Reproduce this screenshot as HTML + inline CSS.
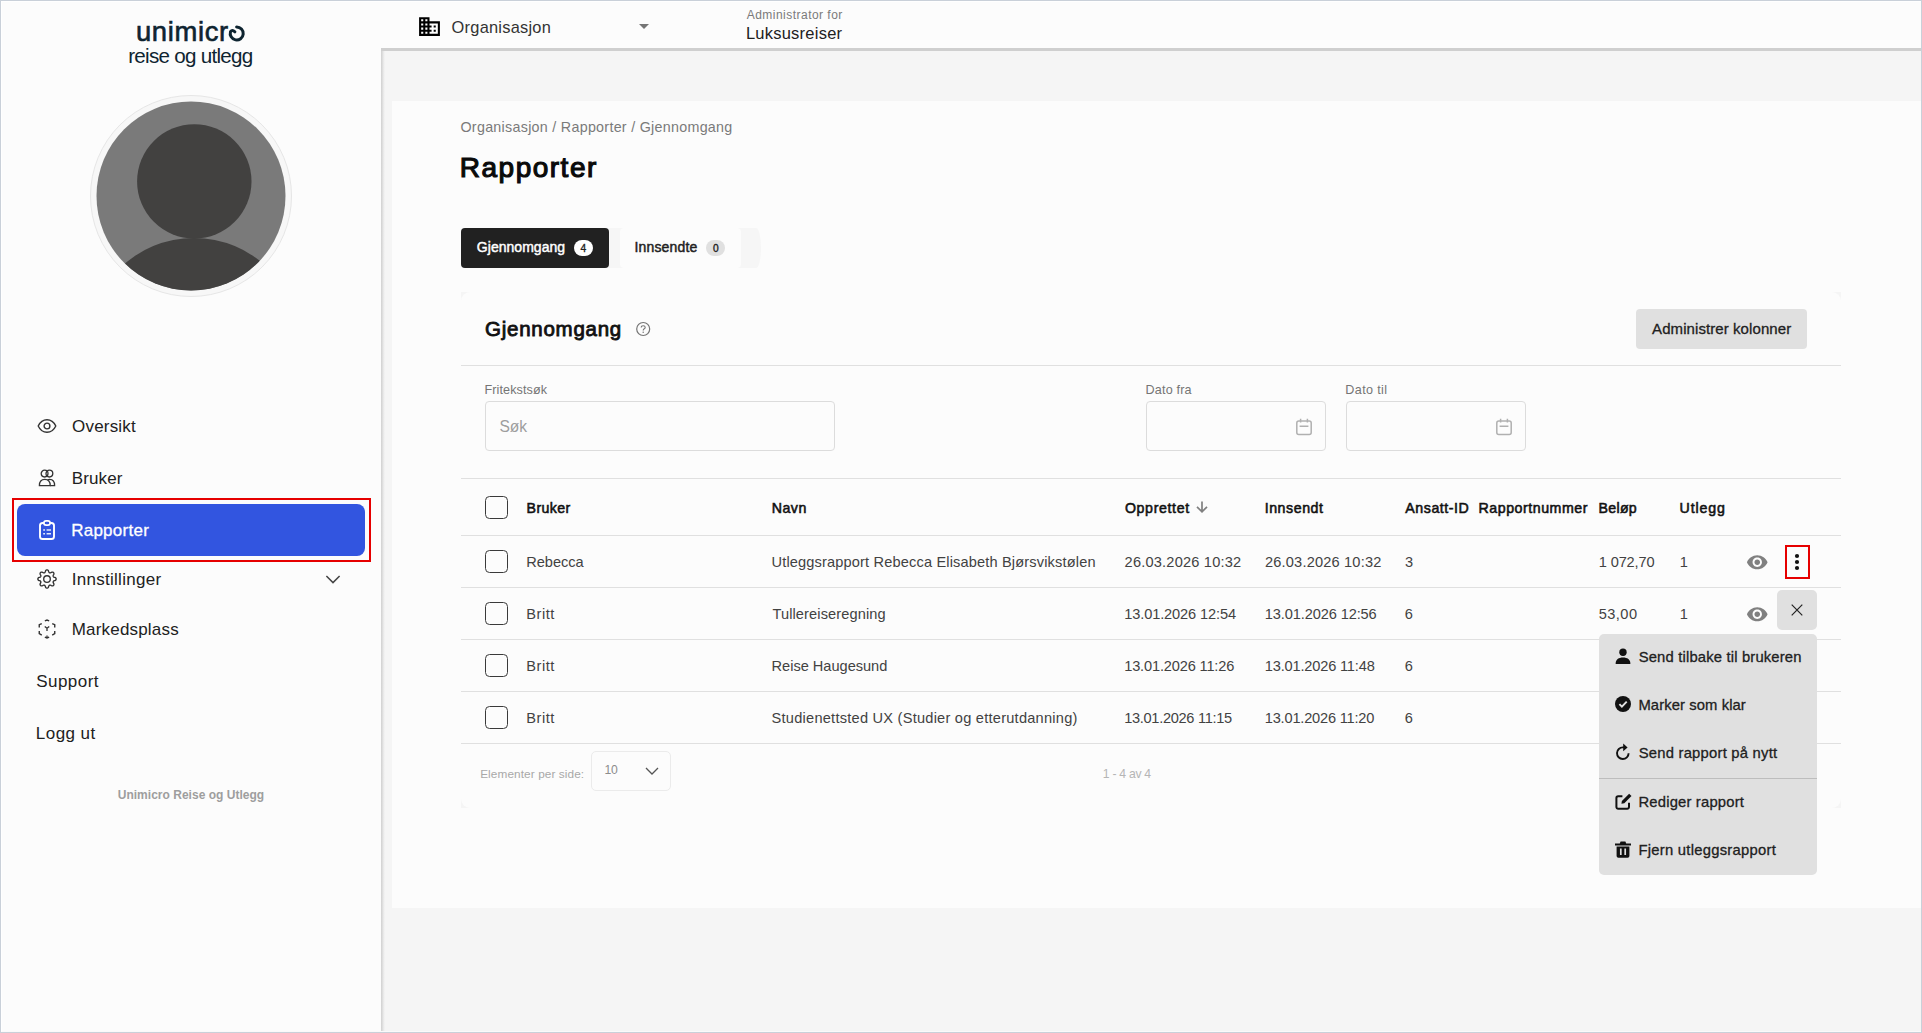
<!DOCTYPE html>
<html lang="no">
<head>
<meta charset="utf-8">
<title>Rapporter - Unimicro Reise og Utlegg</title>
<style>
*{box-sizing:border-box;margin:0;padding:0}
html,body{width:1922px;height:1033px;overflow:hidden;background:#fcfcfc}
body{position:relative;font-family:"Liberation Sans",sans-serif;color:#212121;-webkit-font-smoothing:antialiased}
.abs{position:absolute}
.t{position:absolute;white-space:nowrap;line-height:1}
svg{position:absolute;overflow:visible}
/* frame */
#frame{position:absolute;left:0;top:0;width:1922px;height:1033px;border:1px solid #c9d0d9;z-index:50;pointer-events:none}
#frame2{position:absolute;left:1px;top:1px;width:1920px;height:1031px;border:1px solid #ffffff;border-right:none;border-bottom-color:#fafafa;z-index:49;pointer-events:none}
/* sidebar */
#sidebar{left:0;top:0;width:381px;height:1033px;background:#fcfcfc}
/* topbar */
#topbar{left:381px;top:0;width:1541px;height:48px;background:#fcfcfc}
/* main */
#main{left:381px;top:48px;width:1541px;height:985px;background:#f5f5f5}
#main-top{left:381px;top:48px;width:1541px;height:3px;background:#cfcfcf}
#main-left{left:381px;top:51px;width:4px;height:982px;background:linear-gradient(to right,#d0d0d0,#dcdcdc 33%,#ebebeb 66%,#f5f5f5)}
#content{left:392px;top:101px;width:1530px;height:807px;background:#fcfcfc}
.nav{font-size:17px;color:#212121}
.hline{position:absolute;height:1px;background:#e0e0e0;left:461px;width:1380px}
.cb{position:absolute;width:23px;height:23px;border:1.4px solid #3a3a3a;border-radius:4.5px;background:#fcfcfc;left:485px}
.th{font-weight:normal;font-size:13.6px;color:#111;-webkit-text-stroke:0.55px #111}
.td{font-size:14.4px;color:#424242}
.lbl{font-size:12.5px;color:#757575}
.inp{position:absolute;height:50px;border:1px solid #dcdcdc;border-radius:4px;background:#fcfcfc;top:401px}
.mi{font-size:15px;color:#212121;-webkit-text-stroke:0.3px #212121}
</style>
</head>
<body>
<div id="sidebar" class="abs"></div>
<div id="topbar" class="abs"></div>
<div id="main" class="abs"></div>
<div id="main-top" class="abs"></div>
<div id="main-left" class="abs"></div>
<div id="content" class="abs"></div>


<!-- logo -->
<span class="t" id="logo1" style="left:135.9px;top:18px;font-size:27.4px;font-weight:normal;color:#0e2430;letter-spacing:0.66px;-webkit-text-stroke:0.62px #0e2430">unimicr</span>
<svg style="left:225px;top:21px" width="24" height="24" viewBox="225 21 24 24"><path d="M236.6 27 A6.5 6.5 0 1 1 230.5 31.6 Q232.2 29.4 234.9 31.8" fill="none" stroke="#0e2430" stroke-width="3" stroke-linecap="round"/></svg>
<span class="t" id="logo2" style="left:128.23px;top:46px;font-size:20.6px;color:#0e2430;letter-spacing:-0.727px">reise og utlegg</span>

<!-- avatar -->
<div class="abs" style="left:90px;top:95px;width:202px;height:202px;border-radius:50%;border:1px solid #e6e6e6;background:#f7f7f7"></div>
<svg style="left:96px;top:101px" width="190" height="190" viewBox="96 101 190 190">
  <defs><clipPath id="avc"><circle cx="191" cy="196" r="94.5"/></clipPath></defs>
  <circle cx="191" cy="196" r="94.5" fill="#7a7a7a"/>
  <g clip-path="url(#avc)" fill="#424140">
    <circle cx="194.3" cy="181.4" r="57.2"/>
    <circle cx="194" cy="344.5" r="106.5"/>
  </g>
</svg>

<!-- nav -->
<svg style="left:37px;top:418px" width="20" height="16" viewBox="0 0 20 16"><path d="M1.2 8 C3.2 3.8 6.3 1.7 10 1.7 S16.8 3.8 18.8 8 C16.8 12.2 13.7 14.3 10 14.3 S3.2 12.2 1.2 8Z" fill="none" stroke="#333" stroke-width="1.4"/><circle cx="10" cy="8" r="2.9" fill="none" stroke="#333" stroke-width="1.4"/></svg>
<span class="t nav" id="n1" style="left:72.06px;top:418px;font-size:17px;letter-spacing:0.190px">Oversikt</span>

<svg style="left:38px;top:469px" width="18" height="18" viewBox="0 0 18 18" fill="none" stroke="#333" stroke-width="1.3"><circle cx="6.6" cy="4.6" r="3.4"/><circle cx="11.4" cy="4.6" r="3.4"/><path d="M1.4 16.6 C1.4 12.6 3.6 10.4 6.8 10.4 C10 10.4 12.2 12.6 12.2 16.6 Z"/><path d="M9.6 10.9 C10.2 10.6 10.9 10.4 11.6 10.4 C14.6 10.4 16.6 12.6 16.6 16.6 H12.2"/></svg>
<span class="t nav" id="n2" style="left:71.65px;top:470px;font-size:17px;letter-spacing:0.156px">Bruker</span>

<div class="abs" style="left:12px;top:498px;width:359px;height:64px;border:2px solid #e60000"></div>
<div class="abs" style="left:17px;top:504px;width:348px;height:52px;border-radius:8px;background:#3255e0"></div>
<svg style="left:38px;top:519px" width="18" height="22" viewBox="38 519 18 22" fill="none" stroke="#fff"><rect x="40" y="523" width="14" height="16" rx="2.6" stroke-width="1.9"/><rect x="43.9" y="520.8" width="6.2" height="4.4" rx="2.2" stroke-width="1.7" fill="#3255e0"/><path d="M43.2 530.1h1.8M46.6 530.1h4.4M43.2 533.8h1.8M46.6 533.8h4.4" stroke-width="1.5" stroke="#e4eafc"/></svg>
<span class="t nav" id="n3" style="left:71.14px;top:522px;color:#fff;font-size:17px;letter-spacing:0.270px;-webkit-text-stroke:0.3px #fff">Rapporter</span>

<svg style="left:36px;top:568px" width="22" height="22" viewBox="-11 -11 22 22" fill="none" stroke="#333" stroke-width="1.35"><path d="M9.15 0.00 L9.11 0.36 L8.98 0.71 L8.76 1.04 L8.44 1.34 L7.80 1.55 L7.15 1.72 L6.81 1.92 L6.56 2.13 L6.37 2.35 L6.24 2.58 L6.16 2.84 L6.14 3.13 L6.18 3.46 L6.27 3.84 L6.61 4.42 L6.91 5.02 L6.93 5.46 L6.85 5.85 L6.69 6.19 L6.47 6.47 L6.19 6.69 L5.85 6.85 L5.46 6.93 L5.02 6.91 L4.42 6.61 L3.84 6.27 L3.46 6.18 L3.13 6.14 L2.84 6.16 L2.58 6.24 L2.35 6.37 L2.13 6.56 L1.92 6.81 L1.72 7.15 L1.55 7.80 L1.34 8.44 L1.04 8.76 L0.71 8.98 L0.36 9.11 L0.00 9.15 L-0.36 9.11 L-0.71 8.98 L-1.04 8.76 L-1.34 8.44 L-1.55 7.80 L-1.72 7.15 L-1.92 6.81 L-2.13 6.56 L-2.35 6.37 L-2.58 6.24 L-2.84 6.16 L-3.13 6.14 L-3.46 6.18 L-3.84 6.27 L-4.42 6.61 L-5.02 6.91 L-5.46 6.93 L-5.85 6.85 L-6.19 6.69 L-6.47 6.47 L-6.69 6.19 L-6.85 5.85 L-6.93 5.46 L-6.91 5.02 L-6.61 4.42 L-6.27 3.84 L-6.18 3.46 L-6.14 3.13 L-6.16 2.84 L-6.24 2.58 L-6.37 2.35 L-6.56 2.13 L-6.81 1.92 L-7.15 1.72 L-7.80 1.55 L-8.44 1.34 L-8.76 1.04 L-8.98 0.71 L-9.11 0.36 L-9.15 0.00 L-9.11 -0.36 L-8.98 -0.71 L-8.76 -1.04 L-8.44 -1.34 L-7.80 -1.55 L-7.15 -1.72 L-6.81 -1.92 L-6.56 -2.13 L-6.37 -2.35 L-6.24 -2.58 L-6.16 -2.84 L-6.14 -3.13 L-6.18 -3.46 L-6.27 -3.84 L-6.61 -4.42 L-6.91 -5.02 L-6.93 -5.46 L-6.85 -5.85 L-6.69 -6.19 L-6.47 -6.47 L-6.19 -6.69 L-5.85 -6.85 L-5.46 -6.93 L-5.02 -6.91 L-4.42 -6.61 L-3.84 -6.27 L-3.46 -6.18 L-3.13 -6.14 L-2.84 -6.16 L-2.58 -6.24 L-2.35 -6.37 L-2.13 -6.56 L-1.92 -6.81 L-1.72 -7.15 L-1.55 -7.80 L-1.34 -8.44 L-1.04 -8.76 L-0.71 -8.98 L-0.36 -9.11 L-0.00 -9.15 L0.36 -9.11 L0.71 -8.98 L1.04 -8.76 L1.34 -8.44 L1.55 -7.80 L1.72 -7.15 L1.92 -6.81 L2.13 -6.56 L2.35 -6.37 L2.58 -6.24 L2.84 -6.16 L3.13 -6.14 L3.46 -6.18 L3.84 -6.27 L4.42 -6.61 L5.02 -6.91 L5.46 -6.93 L5.85 -6.85 L6.19 -6.69 L6.47 -6.47 L6.69 -6.19 L6.85 -5.85 L6.93 -5.46 L6.91 -5.02 L6.61 -4.42 L6.27 -3.84 L6.18 -3.46 L6.14 -3.13 L6.16 -2.84 L6.24 -2.58 L6.37 -2.35 L6.56 -2.13 L6.81 -1.92 L7.15 -1.72 L7.80 -1.55 L8.44 -1.34 L8.76 -1.04 L8.98 -0.71 L9.11 -0.36Z"/><circle cx="0" cy="0" r="3.3"/></svg>
<span class="t nav" id="n4" style="left:71.76px;top:571px;font-size:17px;letter-spacing:0.275px">Innstillinger</span>
<svg style="left:325px;top:573px" width="16" height="12" viewBox="325 573 16 12"><path d="M326.4 576 L333 582.6 L339.6 576" fill="none" stroke="#444" stroke-width="1.5"/></svg>

<svg style="left:36px;top:618px" width="22" height="22" viewBox="-11 -11 22 22" fill="none" stroke="#333" stroke-width="1.55"><g transform="translate(0,0.1) scale(0.9)"><path d="M-2.4 -9.2 L0 -10 L2.4 -9.2"/><path d="M5.8 -6.2 L8.6 -4.9 L8.6 -1.8"/><path d="M8.6 2.2 L8.6 5 L5.8 6.600"/><path d="M2.4 8.800 L0 9.800 L-2.4 8.800"/><path d="M-5.8 6.600 L-8.6 5 L-8.600 2.200"/><path d="M-8.600 -1.800 L-8.600 -4.900 L-5.800 -6.200"/><path d="M-2.500 -3 L0 -1 L2.500 -3 M0 -1 V2.200" stroke-width="1.45"/><path d="M0 7.200v2" stroke-width="1.450"/></g></svg>
<span class="t nav" id="n5" style="left:71.69px;top:621px;font-size:17px;letter-spacing:0.192px">Markedsplass</span>

<span class="t nav" id="n6" style="left:36.28px;top:673px;font-size:17px;letter-spacing:0.448px">Support</span>
<span class="t nav" id="n7" style="left:35.87px;top:725px;font-size:17px;letter-spacing:0.431px">Logg ut</span>
<span class="t" id="foot" style="left:117.74px;top:789px;font-size:12px;font-weight:bold;color:#9e9e9e;letter-spacing:0.019px">Unimicro Reise og Utlegg</span>


<svg style="left:416.9px;top:14.1px" width="25" height="25" viewBox="0 0 24 24"><path fill="#000" d="M12 7V3H2v18h20V7H12zM6 19H4v-2h2v2zm0-4H4v-2h2v2zm0-4H4V9h2v2zm0-4H4V5h2v2zm4 12H8v-2h2v2zm0-4H8v-2h2v2zm0-4H8V9h2v2zm0-4H8V5h2v2zm10 12h-8v-2h2v-2h-2v-2h2v-2h-2V9h8v10zm-2-8h-2v2h2v-2zm0 4h-2v2h2v-2z"/></svg>
<span class="t" id="org" style="left:451.61px;top:19px;font-size:16.4px;color:#333;letter-spacing:0.233px">Organisasjon</span>
<svg style="left:638px;top:23px" width="12" height="7" viewBox="0 0 12 7"><path d="M1 1h10L6 6z" fill="#757575"/></svg>
<span class="t" id="adm1" style="left:746.72px;top:9px;font-size:12px;color:#7a7a7a;letter-spacing:0.473px">Administrator for</span>
<span class="t" id="adm2" style="left:745.90px;top:25px;font-size:16.5px;color:#212121;letter-spacing:0.237px">Luksusreiser</span>


<span class="t" id="bc" style="left:460.46px;top:120px;font-size:14.3px;color:#7a7a7a;letter-spacing:0.280px">Organisasjon / Rapporter / Gjennomgang</span>
<span class="t" id="h1" style="left:459.80px;top:154px;font-size:28px;font-weight:normal;color:#0a0a0a;letter-spacing:1.496px;-webkit-text-stroke:1.15px #0a0a0a">Rapporter</span>

<!-- tabs -->
<div class="abs" style="left:461px;top:228px;width:300px;height:40px;background:#f6f6f6;border-radius:4px 5px 5px 4px / 4px 20px 20px 4px"></div>
<div class="abs" style="left:620px;top:228px;width:121px;height:40px;background:#fcfcfc;border-radius:4px"></div>
<div class="abs" style="left:461px;top:228px;width:148px;height:40px;background:#212121;border-radius:4px"></div>
<span class="t" id="tab1" style="left:476.86px;top:240px;font-size:14px;font-weight:normal;color:#fff;letter-spacing:0.027px;-webkit-text-stroke:0.45px #fff">Gjennomgang</span>
<div class="abs" style="left:574px;top:240px;width:19px;height:16px;border-radius:8px;background:#fff"></div>
<span class="t" id="b1" style="left:580.6px;top:244px;font-size:10.2px;color:#212121;-webkit-text-stroke:0.35px #212121">4</span>
<span class="t" id="tab2" style="left:634.49px;top:240px;font-size:14px;font-weight:normal;color:#212121;letter-spacing:0.159px;-webkit-text-stroke:0.45px #212121">Innsendte</span>
<div class="abs" style="left:706px;top:240px;width:19px;height:16px;border-radius:8px;background:#e0e0e0"></div>
<span class="t" id="b2" style="left:712.9px;top:244px;font-size:10.2px;color:#212121;-webkit-text-stroke:0.35px #212121">0</span>

<!-- card -->
<div class="abs" style="left:461px;top:292px;width:1380px;height:516px;background:#f5f5f5"></div>
<div class="abs" style="left:461px;top:292px;width:1380px;height:516px;background:#fcfcfc;border-radius:9px"></div>
<!-- card header -->
<span class="t" id="h2" style="left:485.01px;top:319px;font-size:20.5px;font-weight:normal;color:#111;letter-spacing:0.749px;-webkit-text-stroke:0.85px #111">Gjennomgang</span>
<svg style="left:635px;top:321px" width="16" height="16" viewBox="0 0 16 16"><circle cx="8.2" cy="8" r="6.5" fill="none" stroke="#757575" stroke-width="1.2"/><path d="M6.2 6.6 C6.2 5.3 7.1 4.7 8.2 4.7 C9.3 4.7 10.2 5.4 10.2 6.4 C10.2 7.8 8.2 7.8 8.2 9.4" fill="none" stroke="#757575" stroke-width="1.1"/><circle cx="8.2" cy="11.2" r="0.75" fill="#757575"/></svg>
<div class="abs" style="left:1636px;top:309px;width:171px;height:40px;border-radius:4px;background:#e0e0e0"></div>
<span class="t" id="btn" style="left:1652.05px;top:321px;font-size:15px;color:#212121;letter-spacing:0.081px;-webkit-text-stroke:0.3px #212121">Administrer kolonner</span>
<div class="hline" style="top:365px"></div>

<!-- filters -->
<span class="t lbl" id="l1" style="left:484.53px;top:384px;font-size:12.6px;letter-spacing:0.098px">Fritekstsøk</span>
<div class="inp" style="left:485px;width:350px"></div>
<span class="t" id="ph" style="left:499.45px;top:419px;font-size:15.6px;color:#9e9e9e;letter-spacing:-0.067px">Søk</span>
<span class="t lbl" id="l2" style="left:1145.53px;top:384px;font-size:12.6px;letter-spacing:0.176px">Dato fra</span>
<div class="inp" style="left:1146px;width:180px"></div>
<span class="t lbl" id="l3" style="left:1345.29px;top:384px;font-size:12.6px;letter-spacing:0.373px">Dato til</span>
<div class="inp" style="left:1346px;width:180px"></div>
<svg style="left:1296px;top:418px" width="16" height="18" viewBox="0 0 16 18" fill="none" stroke="#b0b0b0" stroke-width="1.5"><rect x="0.8" y="3" width="14.4" height="13.4" rx="2"/><path d="M4.6 0.8v3.6M11.4 0.8v3.6M3.6 8.2h8.8"/></svg>
<svg style="left:1496px;top:418px" width="16" height="18" viewBox="0 0 16 18" fill="none" stroke="#b0b0b0" stroke-width="1.5"><rect x="0.8" y="3" width="14.4" height="13.4" rx="2"/><path d="M4.6 0.8v3.6M11.4 0.8v3.6M3.6 8.2h8.8"/></svg>
<div class="hline" style="top:478px"></div>


<div class="cb" style="top:496px"></div>
<span class="t th" id="th0" style="left:526.55px;top:501px;font-size:14.2px;letter-spacing:0.382px">Bruker</span>
<span class="t th" id="th1" style="left:771.78px;top:501px;font-size:14.2px;letter-spacing:0.464px">Navn</span>
<span class="t th" id="th2" style="left:1124.92px;top:501px;font-size:14.2px;letter-spacing:0.640px">Opprettet</span>
<svg style="left:1194.6px;top:500px" width="14" height="14" viewBox="0 0 14 14"><path d="M7 1.4v10.3M2 6.8L7 11.8l5-5" fill="none" stroke="#808080" stroke-width="1.7"/></svg>
<span class="t th" id="th3" style="left:1264.65px;top:501px;font-size:14.2px;letter-spacing:0.559px">Innsendt</span>
<span class="t th" id="th4" style="left:1405.35px;top:501px;font-size:14.2px;letter-spacing:0.543px">Ansatt-ID</span>
<span class="t th" id="th5" style="left:1478.55px;top:501px;font-size:14.2px;letter-spacing:0.532px">Rapportnummer</span>
<span class="t th" id="th6" style="left:1598.43px;top:501px;font-size:14.2px;letter-spacing:0.317px">Beløp</span>
<span class="t th" id="th7" style="left:1679.49px;top:501px;font-size:14.2px;letter-spacing:0.897px">Utlegg</span>
<div class="hline" style="top:535px"></div>
<div class="cb" style="top:550px"></div>
<span class="t td" id="r0c0" style="left:526.14px;top:555px;font-size:14.6px;letter-spacing:-0.003px">Rebecca</span>
<span class="t td" id="r0c1" style="left:771.51px;top:555px;font-size:14.6px;letter-spacing:0.150px">Utleggsrapport Rebecca Elisabeth Bjørsvikstølen</span>
<span class="t td" id="r0c2" style="left:1124.59px;top:555px;font-size:14.6px;letter-spacing:0.195px">26.03.2026 10:32</span>
<span class="t td" id="r0c3" style="left:1264.98px;top:555px;font-size:14.6px;letter-spacing:0.181px">26.03.2026 10:32</span>
<span class="t td" id="r0c4" style="left:1404.99px;top:555px;font-size:14.6px;letter-spacing:0.000px">3</span>
<span class="t td" id="r0c5" style="left:1598.77px;top:555px;font-size:14.6px;letter-spacing:-0.140px">1 072,70</span>
<span class="t td" id="r0c6" style="left:1679.77px;top:555px;font-size:14.6px;letter-spacing:0.000px">1</span>
<div class="hline" style="top:587px"></div>
<div class="cb" style="top:602px"></div>
<span class="t td" id="r1c0" style="left:526.14px;top:607px;font-size:14.6px;letter-spacing:0.580px">Britt</span>
<span class="t td" id="r1c1" style="left:772.43px;top:607px;font-size:14.6px;letter-spacing:0.112px">Tullereiseregning</span>
<span class="t td" id="r1c2" style="left:1124.18px;top:607px;font-size:14.6px;letter-spacing:-0.109px">13.01.2026 12:54</span>
<span class="t td" id="r1c3" style="left:1264.77px;top:607px;font-size:14.6px;letter-spacing:-0.111px">13.01.2026 12:56</span>
<span class="t td" id="r1c4" style="left:1404.72px;top:607px;font-size:14.6px;letter-spacing:0.000px">6</span>
<span class="t td" id="r1c5" style="left:1598.78px;top:607px;font-size:14.6px;letter-spacing:0.432px">53,00</span>
<span class="t td" id="r1c6" style="left:1679.77px;top:607px;font-size:14.6px;letter-spacing:0.000px">1</span>
<div class="hline" style="top:639px"></div>
<div class="cb" style="top:654px"></div>
<span class="t td" id="r2c0" style="left:526.14px;top:659px;font-size:14.6px;letter-spacing:0.580px">Britt</span>
<span class="t td" id="r2c1" style="left:771.54px;top:659px;font-size:14.6px;letter-spacing:-0.015px">Reise Haugesund</span>
<span class="t td" id="r2c2" style="left:1124.18px;top:659px;font-size:14.6px;letter-spacing:-0.158px">13.01.2026 11:26</span>
<span class="t td" id="r2c3" style="left:1264.77px;top:659px;font-size:14.6px;letter-spacing:-0.170px">13.01.2026 11:48</span>
<span class="t td" id="r2c4" style="left:1404.72px;top:659px;font-size:14.6px;letter-spacing:0.000px">6</span>
<div class="hline" style="top:691px"></div>
<div class="cb" style="top:706px"></div>
<span class="t td" id="r3c0" style="left:526.14px;top:711px;font-size:14.6px;letter-spacing:0.580px">Britt</span>
<span class="t td" id="r3c1" style="left:771.60px;top:711px;font-size:14.6px;letter-spacing:0.238px">Studienettsted UX (Studier og etterutdanning)</span>
<span class="t td" id="r3c2" style="left:1124.18px;top:711px;font-size:14.6px;letter-spacing:-0.304px">13.01.2026 11:15</span>
<span class="t td" id="r3c3" style="left:1264.77px;top:711px;font-size:14.6px;letter-spacing:-0.193px">13.01.2026 11:20</span>
<span class="t td" id="r3c4" style="left:1404.72px;top:711px;font-size:14.6px;letter-spacing:0.000px">6</span>
<div class="hline" style="top:743px"></div>

<svg style="left:1745.75px;top:550.75px" width="22.5" height="22.5" viewBox="0 0 24 24"><path fill="#808080" d="M12 4.5C7 4.5 2.73 7.61 1 12c1.73 4.39 6 7.5 11 7.5s9.27-3.11 11-7.5c-1.73-4.39-6-7.5-11-7.5zM12 17c-2.76 0-5-2.24-5-5s2.240-5 5-5 5 2.240 5 5-2.240 5-5 5zm0-8c-1.660 0-3 1.340-3 3s1.340 3 3 3 3-1.340 3-3-1.340-3-3-3z"/></svg>
<svg style="left:1745.75px;top:602.75px" width="22.5" height="22.5" viewBox="0 0 24 24"><path fill="#808080" d="M12 4.5C7 4.5 2.73 7.61 1 12c1.73 4.39 6 7.5 11 7.5s9.27-3.11 11-7.5c-1.73-4.39-6-7.5-11-7.5zM12 17c-2.76 0-5-2.24-5-5s2.240-5 5-5 5 2.240 5 5-2.240 5-5 5zm0-8c-1.660 0-3 1.340-3 3s1.340 3 3 3 3-1.340 3-3-1.340-3-3-3z"/></svg>
<div class="abs" style="left:1785px;top:545px;width:25px;height:34px;border:2px solid #e60000"></div>
<svg style="left:1785px;top:550px" width="24" height="24" viewBox="0 0 24 24"><circle cx="12" cy="6" r="2.1" fill="#111"/><circle cx="12" cy="12" r="2.1" fill="#111"/><circle cx="12" cy="18" r="2.1" fill="#111"/></svg>
<div class="abs" style="left:1777px;top:590px;width:40px;height:40px;border-radius:5px;background:#e0e0e0"></div>
<svg style="left:1789px;top:602px" width="16" height="16" viewBox="0 0 16 16"><path d="M2.7 2.7l10.6 10.6M13.3 2.7L2.7 13.3" stroke="#222" stroke-width="1.2" fill="none"/></svg>

<span class="t" id="pg1" style="left:480.17px;top:769px;font-size:11.8px;color:#a8a8a8;letter-spacing:0.094px">Elementer per side:</span>
<div class="abs" style="left:591px;top:751px;width:80px;height:40px;border:1px solid #ebebeb;border-radius:5px"></div>
<span class="t" id="pg2" style="left:604.42px;top:764px;font-size:12.2px;color:#8c8c8c;letter-spacing:-0.103px">10</span>
<svg style="left:644px;top:766px" width="16" height="10" viewBox="0 0 16 10"><path d="M2 2l6 6 6-6" fill="none" stroke="#555" stroke-width="1.3"/></svg>
<span class="t" id="pg3" style="left:1102.86px;top:768px;font-size:12.2px;color:#b5b5b5;letter-spacing:-0.290px">1 - 4 av 4</span>


<div class="abs" style="left:1599px;top:634px;width:218px;height:241px;border-radius:5px;background:#e0e0e0"></div>
<div class="abs" style="left:1599px;top:778px;width:218px;height:1px;background:#bdbdbd"></div>
<svg style="left:1615px;top:648px" width="16" height="16" viewBox="0 0 16 16"><circle cx="8" cy="4.2" r="3.7" fill="#111"/><path d="M0.6 16 C0.6 11.6 3.6 9.6 8 9.6 S15.4 11.6 15.4 16Z" fill="#111"/></svg>
<span class="t mi" id="m1" style="left:1638.69px;top:650px;font-size:14.8px;letter-spacing:0.168px">Send tilbake til brukeren</span>
<svg style="left:1615px;top:696px" width="16" height="16" viewBox="0 0 16 16"><circle cx="8" cy="8" r="8" fill="#111"/><path d="M4.4 8.2l2.5 2.5 4.8-5" fill="none" stroke="#e0e0e0" stroke-width="1.9"/></svg>
<span class="t mi" id="m2" style="left:1638.46px;top:698px;font-size:14.8px;letter-spacing:0.092px">Marker som klar</span>
<svg style="left:1615px;top:743px" width="16" height="18" viewBox="0 0 16 18"><path d="M13.6 10.2 A5.8 5.8 0 1 1 8 4.4 h1.6" fill="none" stroke="#111" stroke-width="1.9"/><path d="M8.2 0.6 L12.6 4.4 L8.2 8.2Z" fill="#111"/></svg>
<span class="t mi" id="m3" style="left:1638.69px;top:746px;font-size:14.8px;letter-spacing:0.227px">Send rapport på nytt</span>
<svg style="left:1615px;top:793px" width="17" height="17" viewBox="0 0 17 17"><path d="M7.4 3.2H3.2 A1.8 1.8 0 0 0 1.4 5v9 A1.8 1.8 0 0 0 3.200 15.800h9 A1.800 1.800 0 0 0 14 14V9.800" fill="none" stroke="#111" stroke-width="2"/><path d="M6.400 10.800 l0.500-2.900 7.200-7.200 2.400 2.400-7.200 7.200z" fill="#111"/></svg>
<span class="t mi" id="m4" style="left:1638.46px;top:795px;font-size:14.8px;letter-spacing:0.186px">Rediger rapport</span>
<svg style="left:1615px;top:841px" width="16" height="17" viewBox="0 0 16 17"><path d="M5.600 0.600h4.800l0.800 1.800H16v2.200H0V2.400h4.800z" fill="#111"/><path d="M1.600 5.600h12.800V15 A1.800 1.800 0 0 1 12.600 16.800H3.400 A1.800 1.800 0 0 1 1.600 15z" fill="#111"/><path d="M5.800 7.600v6.400M10.200 7.600v6.400" stroke="#e0e0e0" stroke-width="1.700"/></svg>
<span class="t mi" id="m5" style="left:1638.46px;top:843px;font-size:14.8px;letter-spacing:0.258px">Fjern utleggsrapport</span>


<div id="frame"></div>
<div id="frame2"></div>
</body>
</html>
